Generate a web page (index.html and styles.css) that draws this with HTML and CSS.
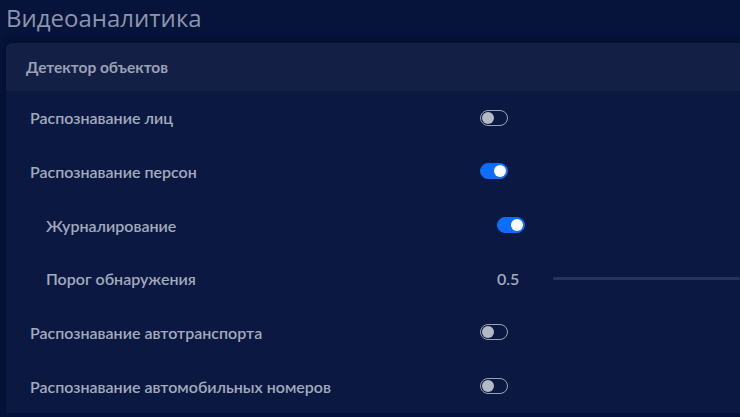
FILE: index.html
```html
<!DOCTYPE html>
<html lang="ru">
<head>
<meta charset="utf-8">
<link rel="stylesheet" href="styles.css">
</head>
<body>
<h1 class="title">Видеоаналитика</h1>
<section class="card">
  <div class="card-header">Детектор объектов</div>
  <div class="card-body">
    <div class="row">
      <span class="label">Распознавание лиц</span>
      <span class="switch"></span>
    </div>
    <div class="row">
      <span class="label">Распознавание персон</span>
      <span class="switch on"></span>
    </div>
    <div class="row nested">
      <span class="label">Журналирование</span>
      <span class="switch on"></span>
    </div>
    <div class="row nested">
      <span class="label">Порог обнаружения</span>
      <span class="value">0.5</span>
      <span class="track"></span>
    </div>
    <div class="row">
      <span class="label">Распознавание автотранспорта</span>
      <span class="switch"></span>
    </div>
    <div class="row">
      <span class="label">Распознавание автомобильных номеров</span>
      <span class="switch"></span>
    </div>
  </div>
</section>
</body>
</html>
```
FILE: styles.css
```css
html, body {
  margin: 0;
  padding: 0;
  width: 740px;
  height: 417px;
  overflow: hidden;
  background: #06133a;
}
.title {
  margin: 0;
  padding: 2px 0 0 6px;
  height: 43px;
  box-sizing: border-box;
  font-family: "Open Sans", "Liberation Sans", sans-serif;
  font-size: 24px;
  font-weight: 400;
  color: #8c95aa;
  line-height: 32px;
}
.card {
  margin-left: 6px;
  width: 734px;
  border-radius: 6px 0 0 0;
  background: #0b1942;
  box-shadow: 0 -2px 8px rgba(0, 0, 0, 0.35);
  overflow: hidden;
  font-family: "Lato", "Liberation Sans", sans-serif;
}
.card-header {
  height: 48px;
  display: flex;
  align-items: center;
  padding-left: 20px;
  background: #141f46;
  color: #9aa1b3;
  font-size: 15.5px;
  font-weight: 700;
}
.card-body {
  display: flex;
  flex-direction: column;
}
.row {
  height: 53.67px;
  display: flex;
  align-items: center;
  padding-left: 24px;
}
.row.nested {
  padding-left: 40px;
}
.label {
  width: 450px;
  flex: none;
  color: #a3aabb;
  font-size: 16px;
  font-weight: 600;
}
.row.nested .label {
  width: 451px;
}
.switch {
  position: relative;
  width: 28px;
  height: 16px;
  box-sizing: border-box;
  border: 1px solid #9aa3b3;
  border-radius: 8px;
}
.switch::after {
  content: "";
  position: absolute;
  top: 1px;
  left: 1px;
  width: 12px;
  height: 12px;
  border-radius: 50%;
  background: #b3bac4;
}
.switch.on {
  background: #0d6efd;
  border-color: #0d6efd;
}
.switch.on::after {
  left: auto;
  right: 1px;
  background: #ffffff;
}
.value {
  width: 56px;
  flex: none;
  color: #a3aabb;
  font-size: 16px;
  font-weight: 600;
}
.track {
  flex: 1;
  height: 3px;
  border-radius: 2px;
  background: #263457;
}
```
